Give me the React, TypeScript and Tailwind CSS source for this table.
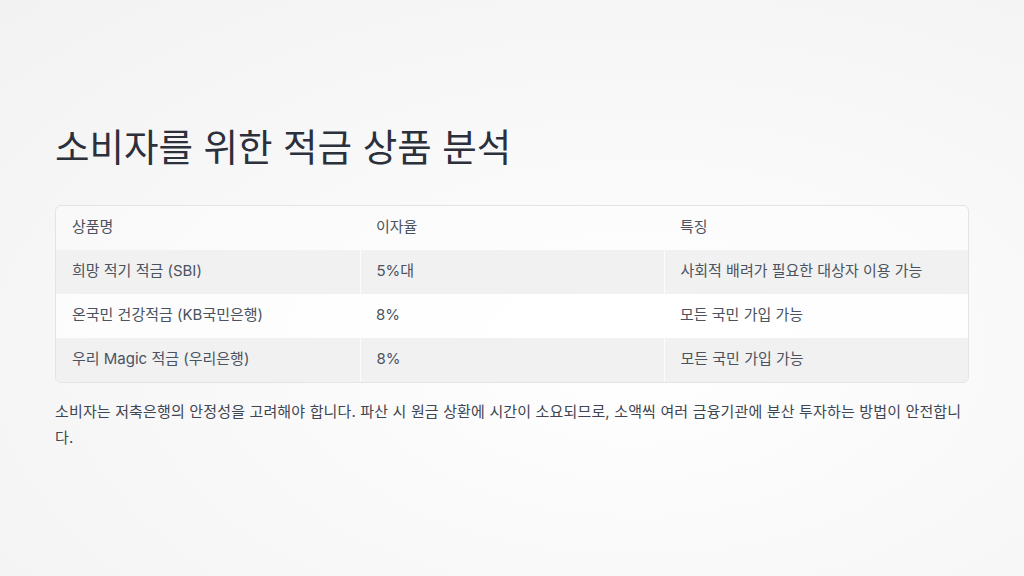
import React from "react";

const rows = [
  ["희망 적기 적금 (SBI)", "5%대", "사회적 배려가 필요한 대상자 이용 가능"],
  ["온국민 건강적금 (KB국민은행)", "8%", "모든 국민 가입 가능"],
  ["우리 Magic 적금 (우리은행)", "8%", "모든 국민 가입 가능"],
];

export default function App() {
  return (
    <div
      className="w-[1024px] h-[576px] flex flex-col justify-center px-[55px] bg-[#f6f6f7] bg-[radial-gradient(ellipse_at_62%_62%,#ffffff_0%,#fafafa_35%,#f2f2f3_100%)] text-[#4b5260]"
      style={{ fontFamily: 'Inter, "Noto Sans CJK KR", sans-serif' }}
    >
      <h1 className="text-[37.5px] leading-[44px] text-[#2b303b] font-normal">
        소비자를 위한 적금 상품 분석
      </h1>
      <div className="mt-[35px] rounded-md border border-[#e4e4e6] overflow-hidden bg-white/40">
        <table className="w-full table-fixed border-collapse text-[15px]">
          <thead>
            <tr className="h-[44px]">
              <th className="text-left font-normal pl-4">상품명</th>
              <th className="text-left font-normal pl-4">이자율</th>
              <th className="text-left font-normal pl-4">특징</th>
            </tr>
          </thead>
          <tbody>
            {rows.map((r, i) => (
              <tr key={i} className={i % 2 === 0 ? "h-[44px] bg-[#efeff0]/90" : "h-[44px] bg-white/50"}>
                {r.map((c, j) => (
                  <td
                    key={j}
                    className={
                      "pl-4 " + (j < 2 ? (i % 2 === 0 ? "border-r border-white/80" : "") : "")
                    }
                  >
                    {c}
                  </td>
                ))}
              </tr>
            ))}
          </tbody>
        </table>
      </div>
      <p className="mt-[16px] max-w-[910px] text-[15px] leading-[26px] tracking-[0.15px] text-[#3f4552]">
        소비자는 저축은행의 안정성을 고려해야 합니다. 파산 시 원금 상환에 시간이 소요되므로, 소액씩 여러 금융기관에 분산 투자하는 방법이 안전합니다.
      </p>
    </div>
  );
}
